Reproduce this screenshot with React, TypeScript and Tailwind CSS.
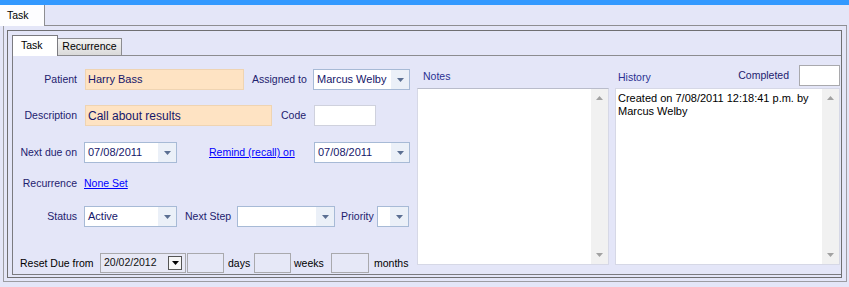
import React from "react";

const label = "text-[10.5px] text-[#1d216e] leading-none whitespace-nowrap";

function Arrow({ color = "#5b6f92" }: { color?: string }) {
  return (
    <svg width="7" height="4" viewBox="0 0 7 4">
      <path d="M0 0h7L3.5 4z" fill={color} />
    </svg>
  );
}

function Combo({ w, value }: { w: string; value?: string }) {
  return (
    <div className={`flex h-[21px] ${w} border border-[#a7bad6] bg-white`}>
      <div className="flex-1 flex items-center pl-[3px] text-[11px] text-[#15166a] whitespace-nowrap overflow-hidden">
        {value}
      </div>
      <div className="w-[18px] bg-[#ebf0f8] flex items-center justify-center">
        <Arrow />
      </div>
    </div>
  );
}

function Scrollbar() {
  return (
    <div className="w-[17px] h-full bg-[#f1f1f1] flex flex-col items-center justify-between py-[7px]">
      <svg width="7" height="4" viewBox="0 0 7 4">
        <path d="M0 4h7L3.5 0z" fill="#a2a2a2" />
      </svg>
      <svg width="7" height="4" viewBox="0 0 7 4">
        <path d="M0 0h7L3.5 4z" fill="#a2a2a2" />
      </svg>
    </div>
  );
}

function BoxInput({ w }: { w: string }) {
  return <div className={`h-[20px] ${w} border border-[#a9a9ad] bg-[#e6e8f7]`} />;
}

export default function App() {
  return (
    <div className="w-[849px] h-[287px] bg-[#e4e6f8] overflow-hidden font-['Liberation_Sans',Arial,sans-serif]">
      <div className="h-[5px] bg-[#3399ff]" />

      {/* outer tab strip */}
      <div className="flex h-[21px]">
        <div className="w-[45px] bg-[#fdfdff] border-r border-[#8e8e92] flex items-center pl-[7px] text-[10.5px] text-black">
          Task
        </div>
        <div className="flex-1 mr-[2px] border-b border-[#8e8e92]" />
      </div>

      {/* outer panel */}
      <div className="ml-[3px] w-[844px] h-[256px] border-l border-r border-b border-[#9c9ca2] pt-[4px]">
        <div className="ml-[3px] w-[835px] h-[248px] border border-[#6f6f72]">
          {/* inner tabs */}
          <div className="flex items-end h-[25px] pl-[4px]">
            <div className="w-[46px] h-[21px] bg-white border-l border-t border-r border-[#7b7b80] flex items-center pl-[8px] text-[10.5px] text-black">
              Task
            </div>
            <div className="w-[64px] h-[18px] bg-gradient-to-b from-[#f3f3f3] to-[#dadada] border-t border-r border-b border-[#8c8c90] flex items-center justify-center text-[10.5px] text-black">
              Recurrence
            </div>
            <div className="flex-1 h-[18px] border-b border-[#8c8c90]" />
          </div>

          {/* tab page */}
          <div className="ml-[4px] h-[219px] border-l border-b border-[#7b7b80] flex">
            {/* form */}
            <div className="w-[399px] flex flex-col pt-[13px]">
              <div className="flex items-center h-[21px]">
                <div className={`w-[64px] text-right ${label}`}>Patient</div>
                <div className="ml-[8px] w-[159px] h-[21px] bg-[#fee3c3] border border-[#efd4b2] flex items-center pl-[2px] text-[11px] text-[#15166a]">
                  Harry Bass
                </div>
                <div className={`ml-[8px] w-[61px] ${label}`}>Assigned to</div>
                <Combo w="w-[97px]" value="Marcus Welby" />
              </div>

              <div className="flex items-center h-[21px] mt-[15px]">
                <div className={`w-[64px] text-right ${label}`}>Description</div>
                <div className="ml-[8px] w-[187px] h-[21px] bg-[#fee3c3] border border-[#efd4b2] flex items-center pl-[2px] text-[12px] text-[#15166a]">
                  Call about results
                </div>
                <div className={`ml-[9px] w-[33px] ${label}`}>Code</div>
                <div className="w-[62px] h-[21px] bg-white border border-[#cfd1dd]" />
              </div>

              <div className="flex items-center h-[21px] mt-[16px]">
                <div className={`w-[64px] text-right ${label}`}>Next due on</div>
                <div className="ml-[7px]">
                  <Combo w="w-[93px]" value="07/08/2011" />
                </div>
                <div className="ml-[32px] w-[105px] text-[10.5px] leading-none text-[#0000ff] underline whitespace-nowrap">
                  Remind (recall) on
                </div>
                <Combo w="w-[96px]" value="07/08/2011" />
              </div>

              <div className="flex items-center h-[21px] mt-[10px]">
                <div className={`w-[64px] text-right ${label}`}>Recurrence</div>
                <div className="ml-[7px] text-[10.5px] leading-none text-[#0000ff] underline">None Set</div>
              </div>

              <div className="flex items-center h-[21px] mt-[12px]">
                <div className={`w-[64px] text-right ${label}`}>Status</div>
                <div className="ml-[7px]">
                  <Combo w="w-[93px]" value="Active" />
                </div>
                <div className={`ml-[8px] w-[52px] ${label}`}>Next Step</div>
                <Combo w="w-[98px]" />
                <div className={`ml-[6px] w-[36px] ${label}`}>Priority</div>
                <Combo w="w-[32px]" />
              </div>

              <div className="flex items-center h-[20px] mt-[26px] pl-[7px]">
                <div className="w-[80px] text-[10.5px] leading-none text-black whitespace-nowrap">Reset Due from</div>
                <div className="w-[86px] h-[20px] border border-[#a9a9ad] bg-[#e8e9f6] flex items-center pl-[3px] pr-[3px]">
                  <span className="flex-1 text-[10.5px] text-[#111]">20/02/2012</span>
                  <div className="w-[14px] h-[14px] border border-[#555] bg-[#f6f6f6] flex items-center justify-center">
                    <Arrow color="#000" />
                  </div>
                </div>
                <div className="ml-[1px]">
                  <BoxInput w="w-[37px]" />
                </div>
                <div className="ml-[4px] w-[26px] text-[10.5px] leading-none text-black">days</div>
                <BoxInput w="w-[37px]" />
                <div className="ml-[3px] w-[37px] text-[10.5px] leading-none text-black">weeks</div>
                <BoxInput w="w-[38px]" />
                <div className="ml-[5px] text-[10.5px] leading-none text-black">months</div>
              </div>
            </div>

            {/* notes */}
            <div className="ml-[5px] w-[192px] flex flex-col">
              <div className="mt-[14px] h-[14px] flex items-center pl-[6px] text-[10.5px] text-[#2a3192]">Notes</div>
              <div className="mt-[4px] h-[177px] bg-white border border-[#d6d8e6] border-t-[#b9bccb] flex justify-end">
                <Scrollbar />
              </div>
            </div>

            {/* history */}
            <div className="ml-[6px] w-[225px] flex flex-col">
              <div className="mt-[9px] h-[21px] flex items-center">
                <div className="pl-[3px] pt-[5px] text-[10.5px] text-[#2a3192]">History</div>
                <div className="ml-auto mr-[10px] text-[10.5px] text-[#1d216e]">Completed</div>
                <div className="w-[41px] h-[21px] bg-white border border-[#a9a9ad]" />
              </div>
              <div className="mt-[2px] h-[177px] bg-white border border-[#d6d8e6] flex">
                <div className="flex-1 pl-[2px] pt-[3px] text-[11px] leading-[13px] text-black">
                  Created on 7/08/2011 12:18:41 p.m. by
                  <br />
                  Marcus Welby
                </div>
                <Scrollbar />
              </div>
            </div>
          </div>
        </div>
      </div>
    </div>
  );
}
